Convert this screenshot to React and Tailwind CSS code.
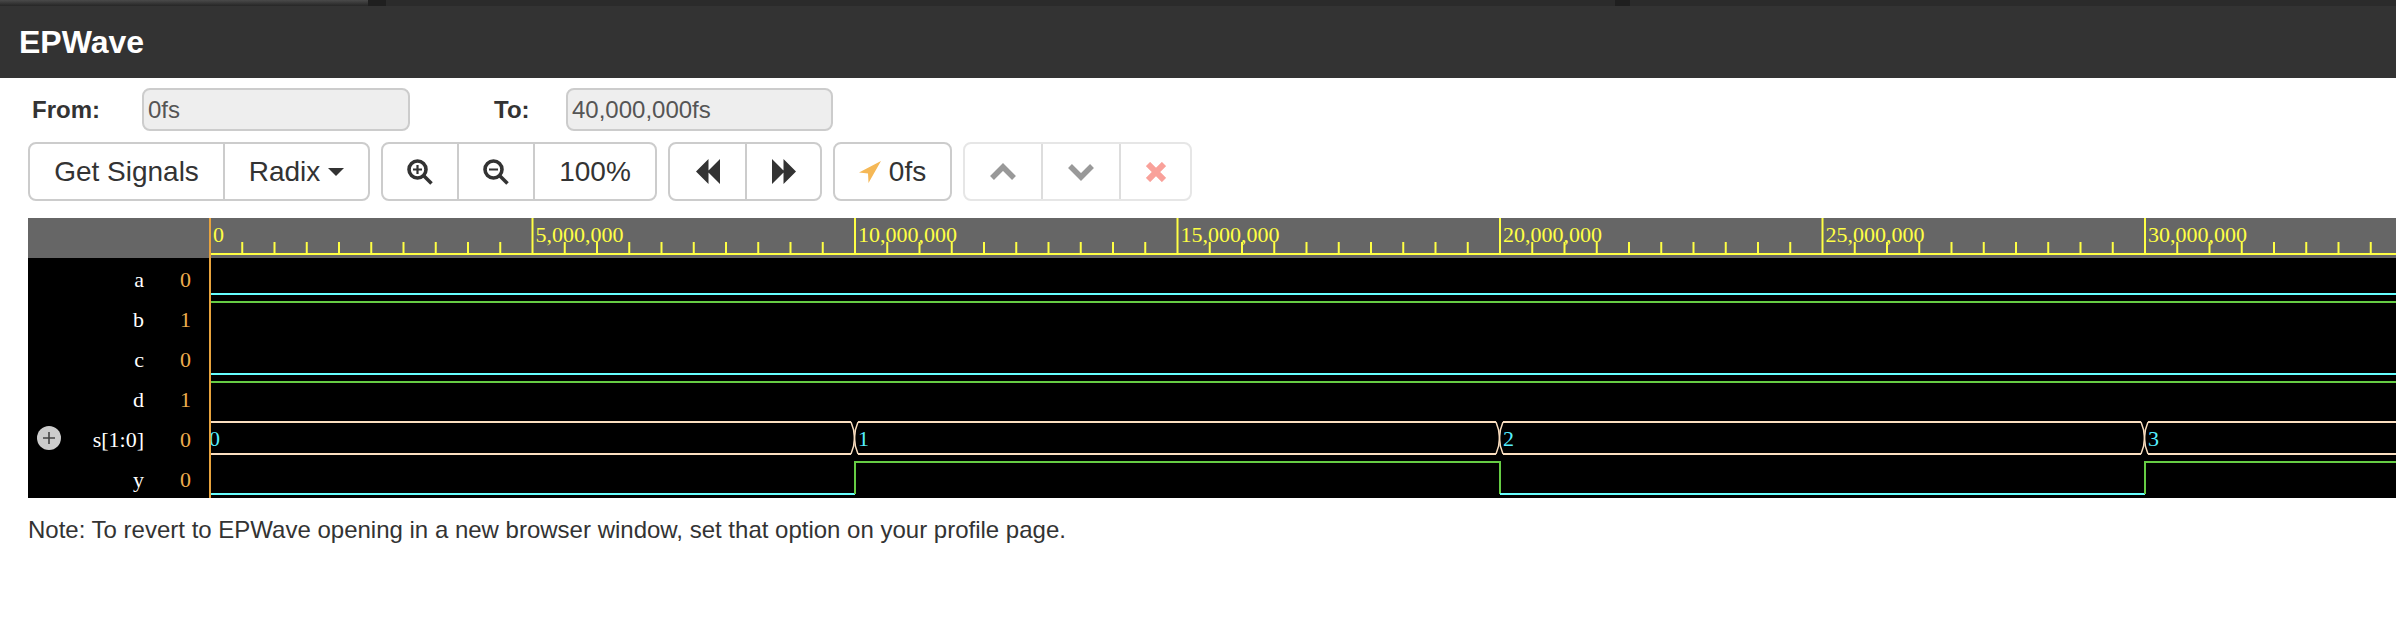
import React from "react";

const TIME_UNIT = 64.5; // px per 1,000,000fs
const X0 = 1; // cursor sits at left edge of the svg

const rulerLabels = ["0", "5,000,000", "10,000,000", "15,000,000", "20,000,000", "25,000,000", "30,000,000"];

const signals = [
  { name: "a", value: "0" },
  { name: "b", value: "1" },
  { name: "c", value: "0" },
  { name: "d", value: "1" },
  { name: "s[1:0]", value: "0", expandable: true },
  { name: "y", value: "0" },
];

const CYAN = "#66ffff";
const GREEN = "#66cc44";
const BUS = "#fbdfc0";
const YELLOW = "#ffff44";
const ORANGE = "#e8a33d";

function xAt(t) {
  return X0 + t * TIME_UNIT;
}

function Ruler() {
  const ticks = [];
  for (let i = 0; i <= 74; i++) {
    const x = X0 + i * (TIME_UNIT / 2);
    ticks.push(
      <line key={i} x1={x} x2={x} y1={i % 10 === 0 ? 0 : 24} y2={36} stroke={YELLOW} strokeWidth="2" />
    );
  }
  return (
    <g>
      <rect x="0" y="0" width="2187" height="40" fill="#666666" />
      <line x1="0" x2="2187" y1="36" y2="36" stroke={YELLOW} strokeWidth="2" />
      {ticks}
      {rulerLabels.map((label, i) => (
        <text key={label} x={xAt(i * 5) + 3} y="24" fontSize="22" fill={YELLOW} fontFamily="'Liberation Serif', serif">
          {label}
        </text>
      ))}
    </g>
  );
}

function BusWave() {
  const top = 204;
  const bottom = 236;
  const mid = (top + bottom) / 2;
  const edges = [10, 20, 30].map(xAt);
  const bounds = [0, ...edges];
  return (
    <g fill="none" stroke={BUS} strokeWidth="2">
      {bounds.map((x, i) => {
        const end = i < edges.length ? edges[i] - 4 : 2187;
        const start = i === 0 ? x : x + 3;
        return (
          <g key={x}>
            <line x1={start} x2={end} y1={top} y2={top} />
            <line x1={start} x2={end} y1={bottom} y2={bottom} />
          </g>
        );
      })}
      {edges.map((x) => (
        <g key={x} strokeWidth="1.5">
          <path d={`M${x - 4} ${top} Q${x + 3} ${mid} ${x - 4} ${bottom}`} />
          <path d={`M${x + 3} ${top} Q${x - 4} ${mid} ${x + 3} ${bottom}`} />
        </g>
      ))}
      {["0", "1", "2", "3"].map((v, i) => (
        <text
          key={v}
          x={i === 0 ? 0 : bounds[i] + 3}
          y="228"
          fontSize="22"
          fill="#55eeff"
          stroke="none"
          fontFamily="'Liberation Serif', serif"
        >
          {v}
        </text>
      ))}
    </g>
  );
}

function Waves() {
  const x10 = xAt(10);
  const x20 = xAt(20);
  const x30 = xAt(30);
  return (
    <svg width="2187" height="280" className="block">
      <rect x="0" y="0" width="2187" height="280" fill="#000000" />
      <Ruler />
      <line x1="0" x2="2187" y1="76" y2="76" stroke={CYAN} strokeWidth="2" />
      <line x1="0" x2="2187" y1="84" y2="84" stroke={GREEN} strokeWidth="2" />
      <line x1="0" x2="2187" y1="156" y2="156" stroke={CYAN} strokeWidth="2" />
      <line x1="0" x2="2187" y1="164" y2="164" stroke={GREEN} strokeWidth="2" />
      <BusWave />
      {/* y output */}
      <g fill="none" strokeWidth="2">
        <path d={`M0 276H${x10}`} stroke={CYAN} />
        <path d={`M${x10} 276V244H${x20}V276`} stroke={GREEN} />
        <path d={`M${x20} 276H${x30}`} stroke={CYAN} />
        <path d={`M${x30} 276V244H2187`} stroke={GREEN} />
      </g>
      <line x1="1" x2="1" y1="0" y2="280" stroke={ORANGE} strokeWidth="2" />
    </svg>
  );
}

function SignalColumn() {
  return (
    <div className="w-[181px] shrink-0 bg-black font-['Liberation_Serif',serif] text-[22px]">
      <div className="h-[40px] bg-[#666666]" />
      {signals.map((s) => (
        <div key={s.name} className="flex h-[40px] items-center pl-[9px]">
          <div className="w-[24px] shrink-0">
            {s.expandable && (
              <span className="flex h-[24px] w-[24px] items-center justify-center rounded-full bg-[#cccccc]">
                <svg width="16" height="16" viewBox="0 0 16 16">
                  <path d="M8 2v12M2 8h12" stroke="#444444" strokeWidth="1.6" />
                </svg>
              </span>
            )}
          </div>
          <span className="w-[83px] shrink-0 pt-[3px] text-right leading-none text-white">{s.name}</span>
          <span className="ml-[36px] pt-[3px] leading-none text-[#f0ad4e]">{s.value}</span>
        </div>
      ))}
    </div>
  );
}

function ZoomIcon({ minus }) {
  return (
    <svg width="26" height="26" viewBox="0 0 26 26" fill="none" stroke="#333333">
      <circle cx="10.5" cy="10.5" r="8.5" strokeWidth="3.6" />
      <path d="M16.5 16.5l8 8" strokeWidth="3.6" />
      <path d={minus ? "M6 10.5h9" : "M6 10.5h9M10.5 6v9"} strokeWidth="2.2" />
    </svg>
  );
}

function SeekIcon({ forward }) {
  return (
    <svg width="24" height="25" viewBox="0 0 24 25" fill="#333333" className={forward ? "" : "-scale-x-100"}>
      <path d="M0 0l12.5 12.5L0 25zM11.5 0L24 12.5 11.5 25z" />
    </svg>
  );
}

function Btn({ children, className = "" }) {
  return (
    <div
      className={
        "flex h-full items-center justify-center gap-[8px] border-l-2 border-[#cccccc] first:border-l-0 " + className
      }
    >
      {children}
    </div>
  );
}

function Group({ children, className = "" }) {
  return (
    <div
      className={
        "flex h-[59px] overflow-hidden rounded-[8px] border-2 border-[#cccccc] bg-white text-[28px] text-[#333333] " +
        className
      }
    >
      {children}
    </div>
  );
}

function RangeField({ value, className }) {
  return (
    <div
      className={
        "flex h-[43px] items-center rounded-[8px] border-2 border-[#cccccc] bg-[#eeeeee] pl-[4px] text-[24px] text-[#555555] " +
        className
      }
    >
      {value}
    </div>
  );
}

export default function App() {
  return (
    <div className="min-h-[642px] w-[2396px] overflow-hidden bg-white font-['Liberation_Sans',Arial,sans-serif] text-[#333333]">
      <div className="flex h-[6px]">
        <div className="w-[368px] bg-gradient-to-b from-[#4a4a4a] to-[#262626]" />
        <div className="w-[18px] bg-[#1f1f1f]" />
        <div className="w-[1229px] bg-[#2b2b2b]" />
        <div className="w-[15px] bg-[#1f1f1f]" />
        <div className="flex-1 bg-[#2b2b2b]" />
      </div>
      <div className="flex h-[72px] items-center bg-[#333333] pl-[19px] text-[32px] font-bold text-white">EPWave</div>

      <div className="mt-[10px] flex items-center pl-[32px] text-[24px]">
        <span className="w-[110px] font-bold">From:</span>
        <RangeField value="0fs" className="w-[268px]" />
        <span className="ml-[84px] w-[72px] font-bold">To:</span>
        <RangeField value="40,000,000fs" className="w-[267px]" />
      </div>

      <div className="mt-[11px] flex gap-[11px] pl-[28px]">
        <Group className="w-[342px]">
          <Btn className="w-[193px]">Get Signals</Btn>
          <Btn className="flex-1">
            Radix
            <span className="h-0 w-0 border-x-[8px] border-t-[8px] border-x-transparent border-t-[#333333]" />
          </Btn>
        </Group>
        <Group className="w-[276px]">
          <Btn className="w-[74px]">
            <ZoomIcon />
          </Btn>
          <Btn className="w-[76px]">
            <ZoomIcon minus />
          </Btn>
          <Btn className="flex-1">100%</Btn>
        </Group>
        <Group className="w-[154px]">
          <Btn className="w-[75px]">
            <SeekIcon />
          </Btn>
          <Btn className="flex-1">
            <SeekIcon forward />
          </Btn>
        </Group>
        <Group className="w-[119px]">
          <Btn className="w-full">
            <svg width="22" height="22" viewBox="0 0 22 22" fill="#f5b856">
              <path d="M22 0L0 11.5l9 1L9.5 22z" />
            </svg>
            0fs
          </Btn>
        </Group>
        <Group className="w-[229px] border-[#e6e6e6]">
          <Btn className="w-[76px] border-[#dddddd]">
            <svg width="26" height="18" viewBox="0 0 26 18" fill="none" stroke="#999999" strokeWidth="5.5">
              <path d="M2 15L13 4l11 11" />
            </svg>
          </Btn>
          <Btn className="w-[78px] border-[#dddddd]">
            <svg width="26" height="18" viewBox="0 0 26 18" fill="none" stroke="#999999" strokeWidth="5.5">
              <path d="M2 3l11 11L24 3" />
            </svg>
          </Btn>
          <Btn className="flex-1 border-[#dddddd]">
            <svg width="20" height="20" viewBox="0 0 20 20" fill="none" stroke="#f9a19a" strokeWidth="6">
              <path d="M2 2l16 16M18 2L2 18" />
            </svg>
          </Btn>
        </Group>
      </div>

      <div className="ml-[28px] mt-[17px] flex">
        <SignalColumn />
        <Waves />
      </div>

      <p className="ml-[28px] mt-[20px] text-[24px] leading-[24px]">
        Note: To revert to EPWave opening in a new browser window, set that option on your profile page.
      </p>
    </div>
  );
}
